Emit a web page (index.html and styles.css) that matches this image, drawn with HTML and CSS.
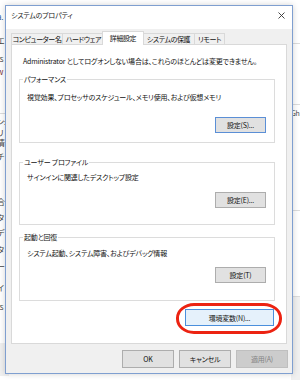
FILE: index.html
```html
<!DOCTYPE html>
<html lang="ja">
<head>
    <meta charset="UTF-8">
    <meta name="viewport" content="width=device-width, initial-scale=1.0">
    <title>システムのプロパティ</title>
    <link rel="stylesheet" href="styles.css">
</head>
<body>
    <!-- window behind the dialog -->
    <div class="desktop">
        <div class="bg-left">
            <span class="link">a.</span>
            <span>エ</span>
            <span>rs</span>
            <span class="warn">w</span>
            <span class="rule"></span>
            <span>ン:</span>
            <span>リ</span>
            <span>情</span>
            <span>チ</span>
            <span>合</span>
            <span>タ</span>
            <span>デ</span>
            <span>タ</span>
            <span>ー</span>
            <span>イ</span>
            <span>rs</span>
            <span>l</span>
            <span class="shade"></span>
        </div>
        <div class="bg-right">
            <span class="rule"></span>
            <span class="rule"></span>
            <span>Gh</span>
            <span class="rule"></span>
            <span class="rule shade"></span>
        </div>
    </div>

    <div class="dialog">
        <div class="titlebar">
            <span class="title">システムのプロパティ</span>
            <svg class="close" width="7" height="7" viewBox="0 0 7 7">
                <path d="M0.5 0.5 L6.5 6.5 M6.5 0.5 L0.5 6.5" stroke="#333" stroke-width="0.9" fill="none"/>
            </svg>
        </div>

        <div class="dialog-body">
            <div class="tabs">
                <div class="tab tab-name">コンピューター名</div>
                <div class="tab tab-hw">ハードウェア</div>
                <div class="tab tab-adv active">詳細設定</div>
                <div class="tab tab-protect">システムの保護</div>
                <div class="tab tab-remote">リモート</div>
            </div>

            <div class="panel">
                <p class="note">Administrator としてログオンしない場合は、これらのほとんどは変更できません。</p>

                <fieldset class="group group-perf">
                    <legend>パフォーマンス</legend>
                    <p class="desc">視覚効果、プロセッサのスケジュール、メモリ使用、および仮想メモリ</p>
                    <div class="actions"><button class="btn btn-small focused">設定(S)...</button></div>
                </fieldset>

                <fieldset class="group group-profile">
                    <legend>ユーザー プロファイル</legend>
                    <p class="desc">サインインに関連したデスクトップ設定</p>
                    <div class="actions"><button class="btn btn-small">設定(E)...</button></div>
                </fieldset>

                <fieldset class="group group-startup">
                    <legend>起動と回復</legend>
                    <p class="desc">システム起動、システム障害、およびデバッグ情報</p>
                    <div class="actions"><button class="btn btn-small">設定(T)</button></div>
                </fieldset>

                <div class="env-row">
                    <div class="env-wrap">
                        <button class="btn env">環境変数(N)...</button>
                        <span class="ring"></span>
                    </div>
                </div>
            </div>

            <div class="footer">
                <button class="btn btn-footer">OK</button>
                <button class="btn btn-footer">キャンセル</button>
                <button class="btn btn-footer" disabled>適用(A)</button>
            </div>
        </div>
    </div>
</body>
</html>
```

FILE: styles.css
```css
* {
    margin: 0;
    padding: 0;
    box-sizing: border-box;
}

body {
    width: 300px;
    height: 380px;
    overflow: hidden;
    position: relative;
    background: #ffffff;
    font-family: 'Noto Sans CJK JP', 'Noto Sans', sans-serif;
    font-size: 7px;
    letter-spacing: -0.2px;
    line-height: 10px;
    font-feature-settings: "palt";
    color: #111;
}

/* background window */
.desktop {
    height: 100%;
    display: flex;
    justify-content: space-between;
}

.bg-left {
    width: 12px;
    margin-left: -3px;
    padding-top: 12px;
    display: grid;
    grid-template-rows: 24px 18px 13px 46px 4px 11px 10px 14px 45px 16px 15px 17px 17px 21px 19px 20px 21px 33px;
    color: #444;
    font-size: 8px;
}

.bg-left .link {
    color: #2b5797;
}

.bg-left .warn {
    color: #7a2a2a;
}

.bg-right {
    width: 10px;
    padding-top: 43px;
    display: grid;
    grid-template-rows: 61px 4px 102px 86px 1fr;
    color: #444;
    padding-left: 1px;
}

.rule {
    border-top: 1px solid #dcdcdc;
}

.shade {
    background: #f0f0f0;
}

/* dialog */
.dialog {
    position: absolute;
    left: 5px;
    top: 5px;
    width: 288px;
    height: 369px;
    border: 1px solid #7f9fd0;
    box-shadow: 0 0 6px rgba(0, 0, 0, 0.18);
    display: flex;
    flex-direction: column;
    background: #f0f0f0;
}

.titlebar {
    height: 23px;
    background: #ffffff;
    display: flex;
    align-items: center;
    justify-content: space-between;
    padding: 0 7px 5px 5px;
}

.title {
    color: #222;
}

.dialog-body {
    flex: 1;
    display: flex;
    flex-direction: column;
    padding: 4px 4px 5px 5px;
}

.tabs {
    display: flex;
    height: 11px;
}

.tab {
    border: 1px solid #d9d9d9;
    border-bottom: none;
    margin-right: -1px;
    background: #f0f0f0;
    line-height: 10px;
    letter-spacing: -0.4px;
    text-align: center;
    white-space: nowrap;
}

.tab-name {
    width: 52px;
}

.tab-hw {
    width: 43px;
}

.tab-protect {
    width: 53px;
}

.tab-remote {
    width: 31px;
}

.tab.active {
    width: 42px;
    background: #ffffff;
    margin: -2px -2px -1px -2px;
    padding-top: 1px;
    height: 14px;
    position: relative;
    z-index: 1;
}

.panel {
    flex: 1;
    background: #ffffff;
    border: 1px solid #d9d9d9;
    margin-right: 1px;
    padding: 11px 11px 0 7px;
    display: flex;
    flex-direction: column;
}

.note {
    margin-left: 4px;
    white-space: nowrap;
}

.group {
    border: 1px solid #dcdcdc;
    padding: 0 7px;
    min-width: 0;
}

.group legend {
    padding: 0 1px;
    margin-left: -4px;
    line-height: 10px;
}

.group-perf {
    margin-top: 8px;
}

.group-perf .desc {
    margin-top: 8px;
}

.group-perf .actions {
    margin-top: 15px;
    padding-bottom: 9px;
}

.group-profile {
    margin-top: 14px;
}

.group-profile .desc {
    margin-top: 5px;
}

.group-profile .actions {
    margin-top: 10px;
    padding-bottom: 16px;
}

.group-startup {
    margin-top: 7px;
}

.group-startup .desc {
    margin-top: 6px;
}

.group-startup .actions {
    margin-top: 9px;
    padding-bottom: 17px;
}

.desc {
    white-space: nowrap;
}

.actions {
    display: flex;
    justify-content: flex-end;
    padding-right: 1px;
}

.btn {
    font: inherit;
    letter-spacing: inherit;
    font-feature-settings: "palt";
    color: #111;
    background: #e1e1e1;
    border: 1px solid #adadad;
    border-radius: 0;
    display: flex;
    align-items: center;
    justify-content: center;
    white-space: nowrap;
}

.btn-small {
    width: 51px;
    height: 16px;
}

.btn.focused {
    border-color: #5b8fd6;
}

.env-row {
    margin-top: 8px;
    display: flex;
    justify-content: flex-end;
    padding-right: 1px;
}

.env-wrap {
    position: relative;
}

.btn.env {
    width: 89px;
    height: 17px;
    background: #e5f1fb;
    border-color: #4a8fdc;
}

/* red highlight drawn over the screenshot */
.ring {
    position: absolute;
    left: -9px;
    right: -8px;
    top: -6px;
    bottom: -8px;
    border: 3px solid #ec2312;
    border-radius: 18px / 15px;
}

.footer {
    margin-top: 6px;
    display: flex;
    justify-content: flex-end;
    gap: 5px;
}

.btn-footer {
    width: 52px;
    height: 18px;
}

.btn-footer:disabled {
    background: #cccccc;
    border-color: #bfbfbf;
    color: #838383;
}
```
